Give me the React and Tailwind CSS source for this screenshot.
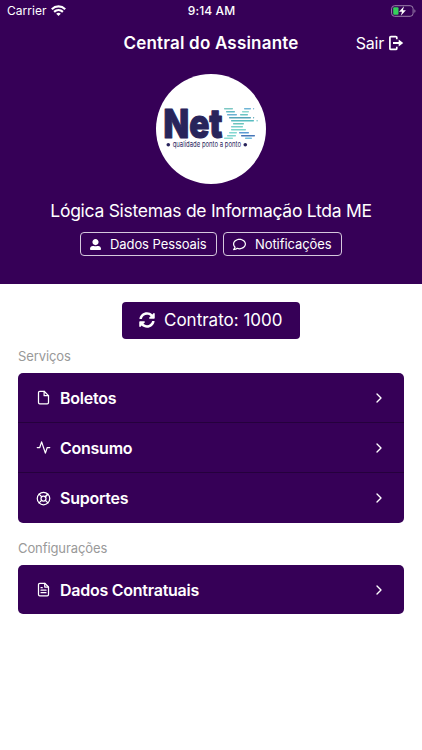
import React from "react";
import { FaUserAlt, FaRegComment, FaSyncAlt } from "react-icons/fa";
import { FiFile, FiActivity, FiLifeBuoy, FiFileText, FiChevronRight } from "react-icons/fi";

const services = [
    { label: "Boletos", Icon: FiFile },
    { label: "Consumo", Icon: FiActivity },
    { label: "Suportes", Icon: FiLifeBuoy },
];

const settings = [
    { label: "Dados Contratuais", Icon: FiFileText },
];

// x, y, width, color of each dash in the logo's X
const dashes = [
    [68, 34, 9, "#7cc8c4"], [88, 34, 7, "#6fb5d6"], [97, 34, 1.2, "#6fb5d6"],
    [70, 37, 9, "#62b9c4"], [86, 37, 7, "#8fd8d0"],
    [71, 40, 10, "#6bb2d4"], [84, 40, 8, "#6bc5c4"],
    [73, 43, 22, "#56a5b8"], [97, 43, 1.2, "#56a5b8"],
    [75, 46, 23, "#57bcc0"], [100.5, 46, 1.2, "#57bcc0"],
    [77, 49, 11, "#6ac5bd"],
    [75, 52, 12, "#79cfca"],
    [75, 55, 15, "#7bd4cc"],
    [73, 58, 8, "#84d8d2"], [83, 58, 10, "#5b9bd5"],
    [71, 61, 9, "#7fd3cf"], [85, 61, 14, "#4676b8"],
    [68, 63.5, 9, "#8adad0"], [89, 63.5, 7, "#73bddd"],
];

const Logo = () => (
    <svg viewBox="0 0 110 110" className="size-[110px]">
        <circle cx="55" cy="55" r="55" fill="#fff" />
        <text
            x="7.6" y="64" textLength="59" lengthAdjust="spacingAndGlyphs"
            fontSize="40" fontWeight="900" fontFamily="Inter, sans-serif"
            fill="#28245b" stroke="#28245b" strokeWidth="1" strokeLinejoin="round"
        >Net</text>
        {dashes.map(([x, y, w, color], i) => (
            <rect key={i} x={x} y={y} width={w} height="1.4" rx="0.6" fill={color} />
        ))}
        <circle cx="12.3" cy="70.8" r="1.8" fill="#28245b" />
        <text
            x="16.7" y="72.8" textLength="68.3" lengthAdjust="spacingAndGlyphs"
            fontSize="8" fontFamily="Inter, sans-serif" fill="#28245b"
        >qualidade ponto a ponto</text>
        <circle cx="89.3" cy="70.8" r="1.8" fill="#28245b" />
    </svg>
);

const StatusBar = () => (
    <div className="grid h-[22px] grid-cols-3 items-center pl-[7px] pr-[6px] text-[12px]">
        <div className="flex items-center gap-[4px]">
            <span className="tracking-[0.05px]">Carrier</span>
            <svg viewBox="0 0 15 11" className="mb-px h-[11px] w-[15px]" fill="none" stroke="#fff" strokeWidth="2.2">
                <path d="M0.8 4.2C4.6 0.5 10.4 0.5 14.2 4.2" />
                <path d="M3.1 6.9C5.7 4.6 9.3 4.6 11.9 6.9" />
                <path d="M5.2 8.7C6.6 7.5 8.4 7.5 9.8 8.7L7.5 11Z" fill="#fff" stroke="none" />
            </svg>
        </div>
        <span className="text-center font-medium tracking-[0.1px]">9:14 AM</span>
        <svg viewBox="0 0 26 12" className="h-3 w-[26px] justify-self-end">
            <rect x="1.6" y="0.7" width="21.5" height="10.6" rx="3" fill="none" stroke="#9b80ab" />
            <path d="M24.4 4.2C25.8 4.7 25.8 7.3 24.4 7.8Z" fill="#9b80ab" />
            <rect x="3.2" y="2.3" width="5.3" height="7.4" rx="1" fill="#35d05b" />
            <path d="M14 1.2L9 6.7H12L10.8 10.8L15.9 5.2H12.9Z" fill="#fff" />
        </svg>
    </div>
);

const LogoutIcon = () => (
    <svg viewBox="0 0 16 16" className="h-4 w-4" fill="none" stroke="#fff" strokeWidth="1.7">
        <path d="M8.8 4.2V2.6Q8.8 1.6 7.8 1.6H2.9Q1.9 1.6 1.9 2.6V13.4Q1.9 14.4 2.9 14.4H7.8Q8.8 14.4 8.8 13.4V11.8" />
        <path d="M5 8H12" strokeWidth="2" />
        <path d="M10.7 4.4L15.2 8L10.7 11.6Z" fill="#fff" stroke="none" />
    </svg>
);

const Menu = ({ items }) => (
    <div className="divide-y divide-[#25003d] overflow-hidden rounded-[5px] bg-[#360057] text-white">
        {items.map(({ label, Icon }) => (
            <button key={label} className="flex h-[50px] w-full items-center pl-[18px] pr-[17px] only:h-[49px]">
                <Icon className="size-[15px]" />
                <span className="ml-[9px] flex-1 text-left text-[16px] font-semibold tracking-[-0.25px]">{label}</span>
                <FiChevronRight className="size-4" />
            </button>
        ))}
    </div>
);

const App = () => (
    <div className="h-[750px] w-[422px] overflow-hidden bg-white font-['Inter',sans-serif]">

        <header className="h-[284px] bg-[#360057] text-white">
            <StatusBar />

            <div className="grid h-[43px] grid-cols-[1fr_auto_1fr] items-center px-[18px]">
                <h1 className="col-start-2 pt-px text-[17px] font-semibold tracking-[0.2px]">Central do Assinante</h1>
                <button className="mb-px flex items-center gap-1 justify-self-end text-[16px] tracking-[-0.2px]">
                    Sair
                    <LogoutIcon />
                </button>
            </div>

            <div className="flex flex-col items-center pt-[9px]">
                <Logo />
                <p className="mt-[14px] text-[17.5px] leading-[26px] tracking-[-0.28px]">Lógica Sistemas de Informação Ltda ME</p>
                <div className="mt-[8px] flex gap-[6px] text-[13px]">
                    <button className="flex h-6 w-[137px] items-center rounded-[4px] border border-[#d5c8dd] pl-[9px]">
                        <FaUserAlt className="size-[11px]" />
                        <span className="ml-[9px] pt-px tracking-[-0.08px]">Dados Pessoais</span>
                    </button>
                    <button className="flex h-6 w-[119px] items-center rounded-[4px] border border-[#d5c8dd] pl-[9px]">
                        <FaRegComment className="size-[13px]" />
                        <span className="ml-[9px] pt-px tracking-[-0.08px]">Notificações</span>
                    </button>
                </div>
            </div>
        </header>

        <main className="px-[18px] pt-[18px]">
            <button className="mx-auto flex h-[37px] w-[178px] items-center rounded-[4px] bg-[#360057] pl-[17px] text-[17px] text-white">
                <FaSyncAlt className="mb-px size-4" />
                <span className="ml-[9px]">Contrato: 1000</span>
            </button>

            <h2 className="mt-[7px] mb-[7px] text-[13px] leading-5 tracking-[-0.1px] text-[#999]">Serviços</h2>
            <Menu items={services} />

            <h2 className="mt-[15px] mb-[7px] text-[13px] leading-5 tracking-[-0.1px] text-[#999]">Configurações</h2>
            <Menu items={settings} />
        </main>

    </div>
);

export default App;
